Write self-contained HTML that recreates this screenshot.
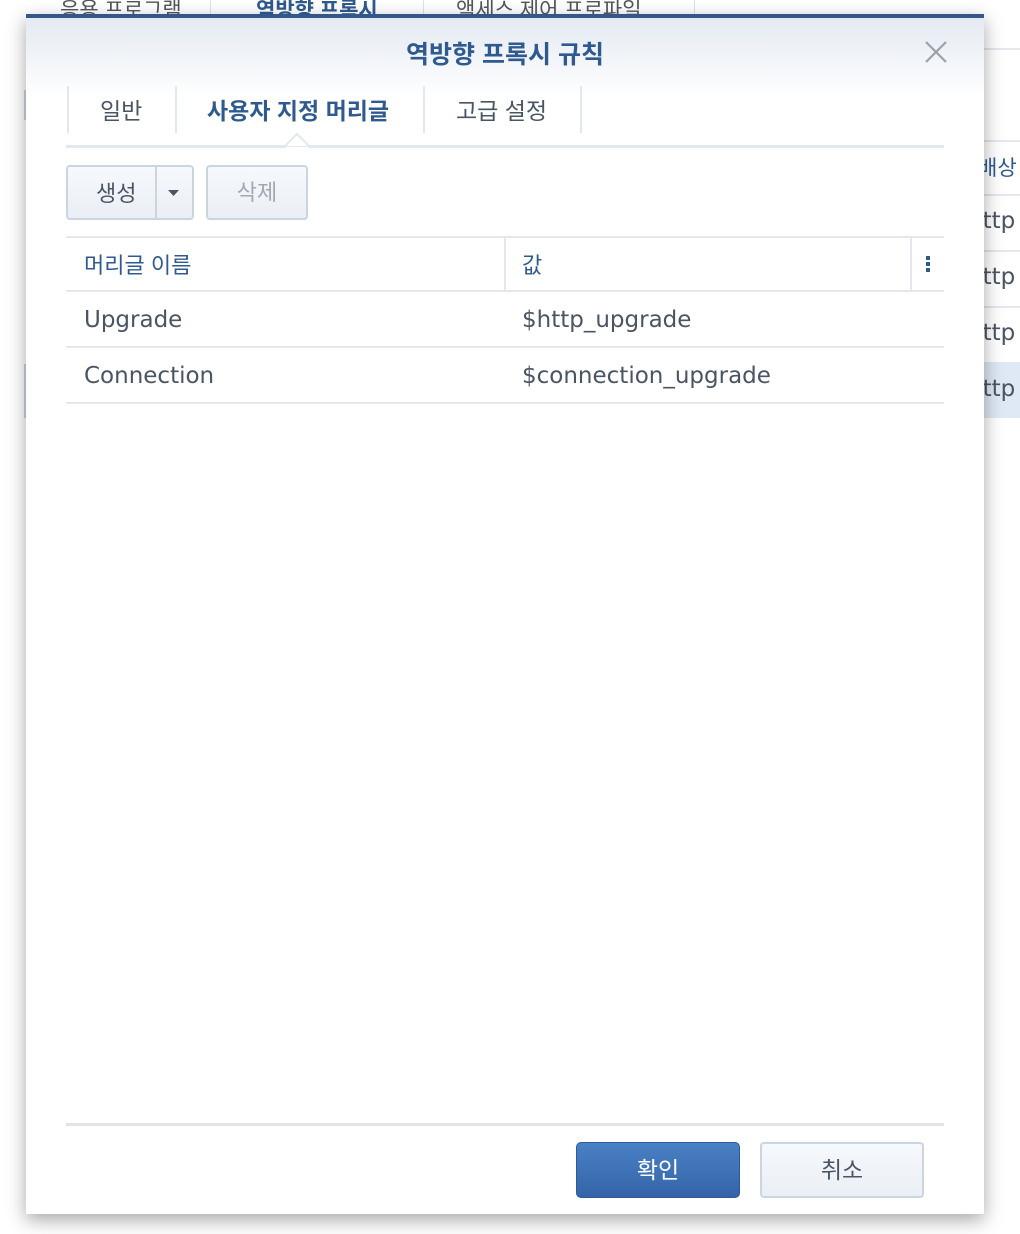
<!DOCTYPE html>
<html><head><meta charset="utf-8"><style>
*{margin:0;padding:0;box-sizing:border-box}
body{width:1020px;height:1234px;position:relative;background:#fff;font-family:"Liberation Sans","Noto Sans CJK KR",sans-serif;overflow:hidden;color:#4a5563}
.a{position:absolute}
.bgtab{top:-6px;font-size:21px;color:#555;white-space:nowrap}
.dlg{left:26px;top:14px;width:958px;height:1200px;background:#fff;border-top:4px solid #34578a;box-shadow:0 6px 18px rgba(0,0,0,.35)}
.hl{background:#e3e8ee;height:2px}
.btn{border:2px solid #cbd5e0;border-radius:4px;background:linear-gradient(#f6f9fc,#eaeff5);font-size:21px;color:#4a5563;text-align:center}
.dv{font-family:"DejaVu Sans","Noto Sans CJK KR",sans-serif;font-size:23px}
</style></head><body>
<div class="a bgtab" style="left:60px">응용 프로그램</div>
<div class="a bgtab" style="left:256px;color:#2f5a8f;font-weight:bold">역방향 프록시</div>
<div class="a bgtab" style="left:456px">액세스 제어 프로파일</div>
<div class="a" style="left:210px;top:0;width:1px;height:14px;background:#dde3ea"></div>
<div class="a" style="left:423px;top:0;width:1px;height:14px;background:#dde3ea"></div>
<div class="a" style="left:694px;top:0;width:1px;height:14px;background:#dde3ea"></div>
<div class="a" style="left:984px;top:48px;width:36px;height:2px;background:#e3e8ee"></div>
<div class="a" style="left:984px;top:140px;width:36px;height:2px;background:#e3e8ee"></div>
<div class="a" style="left:978px;top:152px;font-size:21px;color:#2f5a8f">배상</div>
<div class="a" style="left:984px;top:194px;width:36px;height:2px;background:#e3e8ee"></div>
<div class="a dv" style="left:968px;top:208px">http</div>
<div class="a" style="left:984px;top:250px;width:36px;height:2px;background:#e3e8ee"></div>
<div class="a dv" style="left:968px;top:264px">http</div>
<div class="a" style="left:984px;top:306px;width:36px;height:2px;background:#e3e8ee"></div>
<div class="a dv" style="left:968px;top:320px">http</div>
<div class="a" style="left:984px;top:362px;width:36px;height:56px;background:#dfe8f5"></div>
<div class="a dv" style="left:968px;top:376px">http</div>
<div class="a" style="left:24px;top:90px;width:2px;height:30px;background:#cdd5df"></div>
<div class="a" style="left:24px;top:364px;width:2px;height:54px;background:#c8d4e4"></div>

<div class="a dlg">
 <div class="a" style="left:0;top:0;width:958px;height:80px;background:linear-gradient(#e4eaf2,#fff)"></div>
</div>
<div class="a" style="left:0;top:35px;width:1010px;text-align:center;font-size:25px;font-weight:bold;color:#2f5a8f">역방향 프록시 규칙</div>
<svg class="a" style="left:924px;top:40px" width="24" height="24"><path d="M2 2L22 22M22 2L2 22" stroke="#9aa2ab" stroke-width="2.2"/></svg>

<div class="a" style="left:67px;top:86px;width:2px;height:47px;background:#e3e8ee"></div>
<div class="a" style="left:175px;top:86px;width:2px;height:47px;background:#e3e8ee"></div>
<div class="a" style="left:423px;top:86px;width:2px;height:47px;background:#e3e8ee"></div>
<div class="a" style="left:580px;top:86px;width:2px;height:47px;background:#e3e8ee"></div>
<div class="a" style="left:100px;top:92px;font-size:23px">일반</div>
<div class="a" style="left:207px;top:92px;font-size:23px;font-weight:bold;color:#2f5a8f">사용자 지정 머리글</div>
<div class="a" style="left:456px;top:92px;font-size:23px">고급 설정</div>
<div class="a hl" style="left:66px;top:145px;width:878px;height:3px"></div>
<svg class="a" style="left:284px;top:133px" width="28" height="16"><path d="M0 14L13 1L26 14Z" fill="#fff" stroke="#e3e8ee" stroke-width="2"/><rect x="2" y="14" width="22" height="3" fill="#fff"/></svg>

<div class="a btn" style="left:66px;top:165px;width:128px;height:55px"></div>
<div class="a" style="left:96px;top:176px;font-size:22px">생성</div>
<div class="a" style="left:155px;top:167px;width:2px;height:51px;background:#cbd5e0"></div>
<svg class="a" style="left:168px;top:190px" width="12" height="8"><path d="M0 0H11L5.5 6Z" fill="#4a5563"/></svg>
<div class="a btn" style="left:206px;top:165px;width:102px;height:55px;color:#a0a8b2;line-height:51px;font-size:22px">삭제</div>

<div class="a hl" style="left:66px;top:236px;width:878px"></div>
<div class="a hl" style="left:66px;top:290px;width:878px"></div>
<div class="a hl" style="left:66px;top:346px;width:878px"></div>
<div class="a hl" style="left:66px;top:402px;width:878px"></div>
<div class="a" style="left:504px;top:238px;width:2px;height:52px;background:#e3e8ee"></div>
<div class="a" style="left:910px;top:238px;width:2px;height:52px;background:#e3e8ee"></div>
<div class="a" style="left:84px;top:248px;font-size:22px;color:#2f5a8f">머리글 이름</div>
<div class="a" style="left:522px;top:248px;font-size:22px;color:#2f5a8f">값</div>
<div class="a" style="left:926px;top:256px;width:4px;height:4px;background:#2f5a8f;box-shadow:0 6px 0 #2f5a8f,0 12px 0 #2f5a8f"></div>
<div class="a dv" style="left:84px;top:307px">Upgrade</div>
<div class="a dv" style="left:522px;top:307px">$http_upgrade</div>
<div class="a dv" style="left:84px;top:363px">Connection</div>
<div class="a dv" style="left:522px;top:363px">$connection_upgrade</div>

<div class="a" style="left:66px;top:1123px;width:878px;height:3px;background:#e3e3e3"></div>
<div class="a" style="left:576px;top:1142px;width:164px;height:56px;border-radius:5px;border:1px solid #2d5a99;background:linear-gradient(#4a80c4,#3464a8);color:#fff;font-size:23px;text-align:center;line-height:54px">확인</div>
<div class="a btn" style="left:760px;top:1142px;width:164px;height:56px;line-height:52px;font-size:23px">취소</div>
</body></html>
